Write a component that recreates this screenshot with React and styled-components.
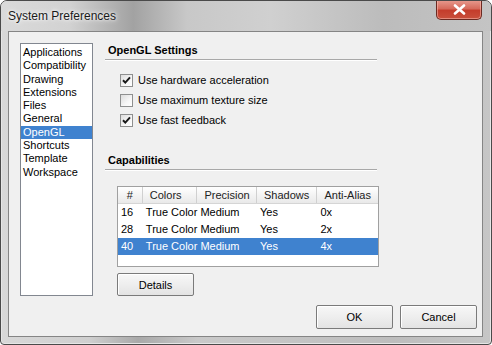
import React, { useState } from 'react';
import styled, { createGlobalStyle } from 'styled-components';

const GlobalStyle = createGlobalStyle`
    html, body {
        margin: 0;
        padding: 0;
        background: #ffffff;
    }
    body {
        font-family: "Liberation Sans", Arial, sans-serif;
        font-size: 11px;
        color: #000;
    }
`

const pages = ['Applications', 'Compatibility', 'Drawing', 'Extensions', 'Files', 'General', 'OpenGL', 'Shortcuts', 'Template', 'Workspace']

const options = [
    { label: 'Use hardware acceleration', checked: true },
    { label: 'Use maximum texture size', checked: false },
    { label: 'Use fast feedback', checked: true },
]

const columns = [
    { title: '#', width: 25 },
    { title: 'Colors', width: 55 },
    { title: 'Precision', width: 60 },
    { title: 'Shadows', width: 61 },
    { title: 'Anti-Alias', width: 61 },
]

const rows = [
    ['16', 'True Color', 'Medium', 'Yes', '0x'],
    ['28', 'True Color', 'Medium', 'Yes', '2x'],
    ['40', 'True Color', 'Medium', 'Yes', '4x'],
]

const CheckBox = ({ checked, label, onToggle }) => (
    <OptionRow onClick={onToggle}>
        <Box>
            {checked &&
                <svg width="11" height="11" viewBox="0 0 11 11">
                    <path d="M2 5.2 L4.3 7.6 L9 2.4" fill="none" stroke="#1a1a1a" strokeWidth="2" />
                </svg>
            }
        </Box>
        <span>{label}</span>
    </OptionRow>
)

const App = () => {
    const [page, setPage] = useState('OpenGL')
    const [checks, setChecks] = useState(options.map(o => o.checked))
    const [selected, setSelected] = useState(2)

    return (
        <>
        <GlobalStyle />
        <Window>
            <TitleBar>
                <Title>System Preferences</Title>
                <CloseButton type='button'>
                    <svg width="13" height="11" viewBox="0 0 13 11">
                        <path d="M2 1.5 L11 9.5 M11 1.5 L2 9.5" stroke="#fff" strokeWidth="2.6" strokeLinecap="round" />
                    </svg>
                </CloseButton>
            </TitleBar>
            <Client>
                <Main>
                    <ListBox>
                        {pages.map(p => (
                            <ListItem key={p} active={p === page} onClick={() => setPage(p)}>{p}</ListItem>
                        ))}
                    </ListBox>
                    <Panel>
                        <SectionTitle>OpenGL Settings</SectionTitle>
                        <Options>
                            {options.map((o, i) => (
                                <CheckBox
                                    key={o.label}
                                    label={o.label}
                                    checked={checks[i]}
                                    onToggle={() => setChecks(checks.map((c, j) => j === i ? !c : c))}
                                />
                            ))}
                        </Options>
                        <SectionTitle gap>Capabilities</SectionTitle>
                        <Table>
                            <HeaderRow>
                                {columns.map(c => (
                                    <HeaderCell key={c.title} w={c.width} center={c.title === '#'}>{c.title}</HeaderCell>
                                ))}
                            </HeaderRow>
                            {rows.map((r, i) => (
                                <Row key={i} active={i === selected} onClick={() => setSelected(i)}>
                                    {r.map((cell, j) => (
                                        <Cell key={j} w={columns[j].width}>{cell}</Cell>
                                    ))}
                                </Row>
                            ))}
                        </Table>
                        <Button type='button' small>Details</Button>
                    </Panel>
                </Main>
                <Footer>
                    <Button type='button'>OK</Button>
                    <Button type='button'>Cancel</Button>
                </Footer>
            </Client>
        </Window>
        </>
    )
}

const Window = styled.div`
    width: 492px;
    height: 345px;
    box-sizing: border-box;
    display: flex;
    flex-direction: column;
    border: 1px solid #4a4a4a;
    border-radius: 7px 7px 4px 4px;
    box-shadow: inset 0 0 0 1px #e6e6e6;
    background: linear-gradient(90deg, #d8d8d8 0%, #cfcfcf 18%, #a9a9a9 28%, #c9c9c9 40%, #c4c4c4 60%, #bdbdbd 80%, #c6c6c6 100%);
    overflow: hidden;
`
const TitleBar = styled.div`
    height: 30px;
    display: flex;
    justify-content: space-between;
    align-items: flex-start;
    padding: 0 9px 0 7px;
    background: linear-gradient(90deg, #dadada 0%, #d2d2d2 14%, #a2a2a2 27%, #c8c8c8 38%, #d0d0d0 55%, #bcbcbc 78%, #c4c4c4 100%);
`
const Title = styled.div`
    margin-top: 8px;
    font-size: 12px;
    line-height: 15px;
    color: #1a1a1a;
    text-shadow: 0 0 6px #ffffff, 0 0 3px #ffffff;
`
const CloseButton = styled.button`
    width: 46px;
    height: 20px;
    margin-top: -1px;
    padding: 0;
    display: flex;
    align-items: center;
    justify-content: center;
    border: 1px solid #6b2a22;
    border-top: none;
    border-radius: 0 0 5px 5px;
    background: linear-gradient(#e89c90 0%, #d66b5c 45%, #c43d2c 55%, #c9503c 100%);
    box-shadow: inset 0 0 0 1px rgba(255, 200, 190, 0.5);
`
const Client = styled.div`
    flex: 1;
    display: flex;
    flex-direction: column;
    margin: 0 8px 7px 7px;
    border: 1px solid #858585;
    background: #f0f0f0;
`
const Main = styled.div`
    display: flex;
    gap: 12px;
    padding: 11px 0 0 11px;
`
const ListBox = styled.div`
    width: 73px;
    height: 253px;
    box-sizing: border-box;
    border: 1px solid #828790;
    background: #fff;
    padding-top: 2px;
`
const ListItem = styled.div`
    line-height: 13.3px;
    padding-left: 2px;
    color: ${props => props.active ? '#fff' : '#000'};
    background: ${props => props.active ? '#3f82cf' : 'transparent'};
    cursor: default;
`
const Panel = styled.div`
    width: 272px;
    display: flex;
    flex-direction: column;
`
const SectionTitle = styled.div`
    height: 16px;
    line-height: 14px;
    padding-left: 3px;
    margin-top: ${props => props.gap ? '23px' : '0'};
    font-weight: 700;
    border-bottom: 1px solid #a8a8a8;
    box-shadow: 0 1px 0 #ffffff;
`
const Options = styled.div`
    margin-top: 10px;
    padding-left: 15px;
`
const OptionRow = styled.div`
    height: 20px;
    display: flex;
    align-items: center;
    gap: 5px;
    cursor: default;
`
const Box = styled.span`
    width: 13px;
    height: 13px;
    box-sizing: border-box;
    display: flex;
    align-items: center;
    justify-content: center;
    border: 1px solid #8e8f8f;
    background: linear-gradient(135deg, #dcdcdc 0%, #f6f6f6 60%, #ffffff 100%);
`
const Table = styled.div`
    width: 262px;
    height: 81px;
    box-sizing: border-box;
    margin: 16px 0 0 12px;
    border: 1px solid #a0a0a0;
    background: #fff;
`
const HeaderRow = styled.div`
    display: flex;
    height: 16px;
    border-bottom: 1px solid #d5d5d5;
    background: linear-gradient(#ffffff 0%, #f4f4f4 50%, #e9e9e9 100%);
`
const HeaderCell = styled.div`
    width: ${props => props.w}px;
    box-sizing: border-box;
    line-height: 16px;
    padding-left: ${props => props.center ? '0' : '7px'};
    text-align: ${props => props.center ? 'center' : 'left'};
    border-right: 1px solid #d0d0d0;
    white-space: nowrap;
    color: #222;
    &:last-child {
        border-right: none;
    }
`
const Row = styled.div`
    display: flex;
    height: 17px;
    color: ${props => props.active ? '#fff' : '#000'};
    background: ${props => props.active ? '#3f82cf' : 'transparent'};
`
const Cell = styled.div`
    width: ${props => props.w}px;
    box-sizing: border-box;
    line-height: 17px;
    padding-left: 3px;
    white-space: nowrap;
`
const Button = styled.button`
    width: 77px;
    height: ${props => props.small ? '23px' : '24px'};
    margin: ${props => props.small ? '6px 0 0 12px' : '0'};
    padding: 0;
    font-family: "Liberation Sans", Arial, sans-serif;
    font-size: 11px;
    color: #000;
    border: 1px solid #7a7a7a;
    border-radius: 2px;
    background: linear-gradient(#f7f7f7 0%, #eeeeee 50%, #e3e3e3 100%);
    box-shadow: inset 1px 1px 0 #ffffff;
`
const Footer = styled.div`
    margin-top: auto;
    display: flex;
    justify-content: flex-end;
    gap: 7px;
    padding: 0 5px 7px 0;
`

export default App;
